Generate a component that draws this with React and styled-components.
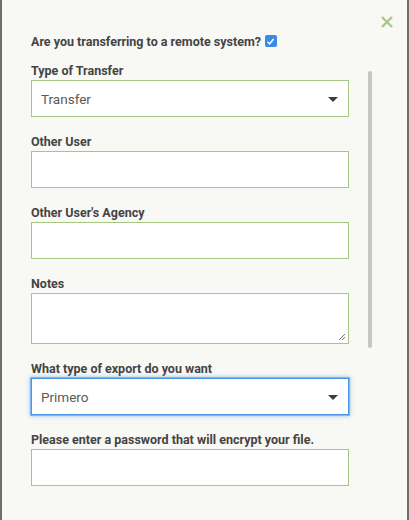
import React from "react";
import styled, { createGlobalStyle } from "styled-components";

const GlobalStyle = createGlobalStyle`
  html, body {
    margin: 0;
    padding: 0;
    background: #f8f8f4;
  }
  * {
    box-sizing: border-box;
  }
`;

const Modal = styled.div`
  position: relative;
  width: 409px;
  height: 520px;
  background: #f8f8f4;
  border-left: 2px solid #6e6e6e;
  border-right: 2px solid #6e6e6e;
  font-family: Roboto, "Liberation Sans", sans-serif;
  overflow: hidden;
`;

const CloseButton = styled.button`
  position: absolute;
  top: 15px;
  right: 13px;
  width: 14px;
  height: 14px;
  padding: 0;
  border: none;
  background: transparent;
  cursor: pointer;
  display: flex;
`;

const ScrollThumb = styled.div`
  position: absolute;
  top: 71px;
  left: 366px;
  width: 4px;
  height: 277px;
  border-radius: 2px;
  background: #c6c6c4;
`;

const Form = styled.form`
  display: flex;
  flex-direction: column;
  padding: 33px 0 0 29px;
  width: 349px;
`;

const CheckRow = styled.label`
  display: flex;
  align-items: center;
  gap: 4px;
  height: 16px;
  margin-bottom: 14px;
  font-size: 12.5px;
  font-weight: 700;
  color: #444;
`;

const CheckBox = styled.span`
  display: inline-flex;
  align-items: center;
  justify-content: center;
  width: 12px;
  height: 12px;
  border-radius: 2px;
  background: #3b8ae8;
`;

const Field = styled.div`
  display: flex;
  flex-direction: column;
  margin-bottom: 17px;
`;

const Label = styled.label`
  font-size: 12.5px;
  font-weight: 700;
  line-height: 16px;
  color: #444;
  margin-bottom: 1px;
`;

const Box = styled.div`
  position: relative;
  display: flex;
  align-items: center;
  width: 318px;
  height: ${(p) => (p.$tall ? "51px" : "37px")};
  padding: 0 9px;
  background: #fff;
  border: 1px solid ${(p) => (p.$focus ? "#4a95e6" : "#a6c782")};
  box-shadow: ${(p) =>
    p.$focus ? "0 0 0 1px #7db6f0, 0 0 4px 1px rgba(90,160,235,0.6)" : "none"};
  font-size: 13.5px;
  color: #5a5a5a;
`;

const Arrow = styled.span`
  position: absolute;
  right: 10px;
  top: 16px;
  width: 0;
  height: 0;
  border-left: 5px solid transparent;
  border-right: 5px solid transparent;
  border-top: 5px solid #3c3c3c;
`;

const Grip = styled.svg`
  position: absolute;
  right: 2px;
  bottom: 2px;
`;

function App() {
  return (
    <>
      <GlobalStyle />
      <Modal>
        <CloseButton aria-label="close">
          <svg width="14" height="14" viewBox="0 0 14 14">
            <path d="M2 2 L12 12 M12 2 L2 12" stroke="#a7c78a" strokeWidth="2.4" />
          </svg>
        </CloseButton>
        <ScrollThumb />
        <Form>
          <CheckRow>
            Are you transferring to a remote system?
            <CheckBox>
              <svg width="9" height="9" viewBox="0 0 9 9">
                <path d="M1.5 4.8 L3.6 6.8 L7.6 2" stroke="#fff" strokeWidth="1.5" fill="none" />
              </svg>
            </CheckBox>
          </CheckRow>

          <Field>
            <Label>Type of Transfer</Label>
            <Box>
              Transfer
              <Arrow />
            </Box>
          </Field>

          <Field>
            <Label>Other User</Label>
            <Box />
          </Field>

          <Field>
            <Label>Other User's Agency</Label>
            <Box />
          </Field>

          <Field>
            <Label>Notes</Label>
            <Box $tall>
              <Grip width="8" height="8" viewBox="0 0 8 8">
                <path d="M1 7 L7 1 M4 7 L7 4" stroke="#555" strokeWidth="0.8" />
              </Grip>
            </Box>
          </Field>

          <Field>
            <Label>What type of export do you want</Label>
            <Box $focus>
              Primero
              <Arrow />
            </Box>
          </Field>

          <Field>
            <Label>Please enter a password that will encrypt your file.</Label>
            <Box />
          </Field>
        </Form>
      </Modal>
    </>
  );
}

export default App;
